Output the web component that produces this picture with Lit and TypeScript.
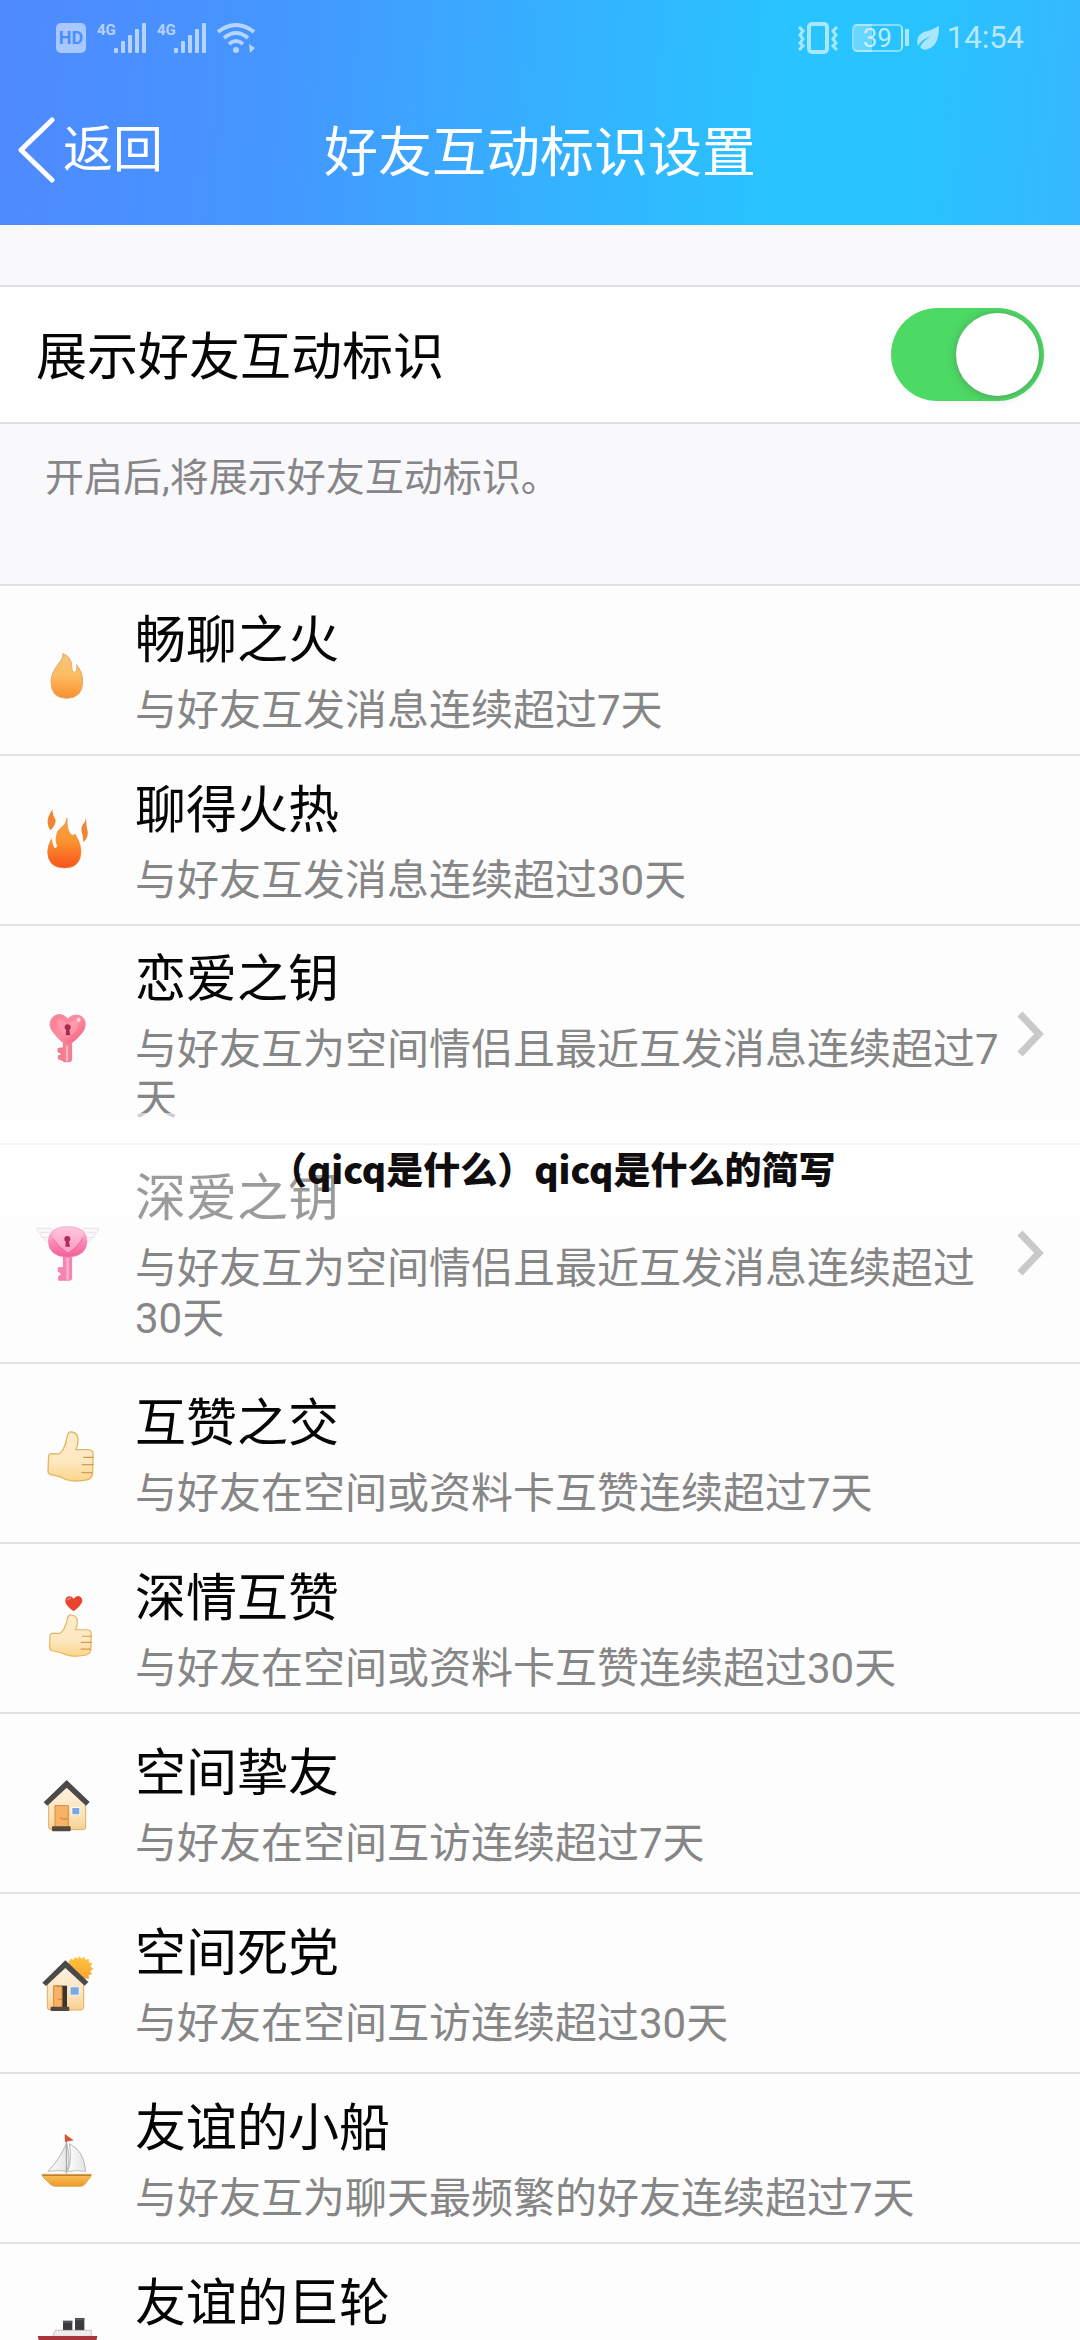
import { LitElement, html, css, svg, nothing, type TemplateResult } from "lit";
import { customElement, property, state } from "lit/decorators.js";
import { classMap } from "lit/directives/class-map.js";

type IconName =
  | "flame" | "blaze" | "key" | "wingedKey" | "thumb"
  | "thumbHeart" | "house" | "sunHouse" | "sailboat" | "liner";

interface Badge {
  icon: IconName;
  title: string;
  desc: string;
  roomy?: boolean;
  link?: boolean;
  caption?: string;
}

const BADGES: Badge[] = [
  { icon: "flame", title: "畅聊之火", desc: "与好友互发消息连续超过7天" },
  { icon: "blaze", title: "聊得火热", desc: "与好友互发消息连续超过30天" },
  { icon: "key", title: "恋爱之钥", desc: "与好友互为空间情侣且最近互发消息连续超过7天", link: true },
  {
    icon: "wingedKey",
    title: "深爱之钥",
    desc: "与好友互为空间情侣且最近互发消息连续超过30天",
    link: true,
    caption: "（qicq是什么）qicq是什么的简写",
  },
  { icon: "thumb", title: "互赞之交", desc: "与好友在空间或资料卡互赞连续超过7天", roomy: true },
  { icon: "thumbHeart", title: "深情互赞", desc: "与好友在空间或资料卡互赞连续超过30天" },
  { icon: "house", title: "空间挚友", desc: "与好友在空间互访连续超过7天", roomy: true },
  { icon: "sunHouse", title: "空间死党", desc: "与好友在空间互访连续超过30天", roomy: true },
  { icon: "sailboat", title: "友谊的小船", desc: "与好友互为聊天最频繁的好友连续超过7天" },
  { icon: "liner", title: "友谊的巨轮", desc: "", roomy: true },
];

const thumbShape = svg`
  <path d="M146 283 Q148 278 156 278 L176 279 Q186 274 190 264 Q200 244 202 224 Q205 211 216 213 Q234 216 234 236 Q234 252 228 266
    L266 266 Q279 267 279 279 L278 332 Q278 350 264 356 Q238 362 212 359 Q196 357 182 348 Q166 344 152 341 Q144 338 144 330 Z"
    fill="url(#skin)" stroke="#e3b564" stroke-width="4" stroke-linejoin="round"/>
  <path d="M251 289 H279 M247 311 H279 M246 335 H277" fill="none" stroke="#cf9d4c" stroke-width="4" stroke-linecap="round"/>`;

const skinGradient = svg`
  <linearGradient id="skin" x1="0" y1="0" x2="0" y2="1">
    <stop offset="0" stop-color="#fdeccb"/><stop offset="0.6" stop-color="#fde8c1"/><stop offset="1" stop-color="#fcd58a"/>
  </linearGradient>`;

const ICONS: Record<IconName, { box: string; art: TemplateResult<2> }> = {
  flame: {
    box: "96 159 216 216",
    art: svg`
      <defs><linearGradient id="fl" x1="0" y1="0" x2="0" y2="1">
        <stop offset="0" stop-color="#f7c67c"/><stop offset="0.5" stop-color="#fbbb62"/><stop offset="1" stop-color="#fa8f2b"/>
      </linearGradient></defs>
      <path d="M189 217 Q190 229 182 240 Q153 273 153 302 Q153 351 200 352 Q247 351 248 304 Q249 272 228 250 Q231 268 225 272 Q218 274 217 262 Q216 229 189 217 Z"
        fill="url(#fl)" stroke="#e6a867" stroke-width="3"/>
      <path d="M217 250 Q216 273 224 272 Q231 269 228 250 Q224 247 217 244 Z" fill="#fff"/>`,
  },
  blaze: {
    box: "96 669 216 216",
    art: svg`
      <defs><linearGradient id="bl" x1="0" y1="0" x2="0" y2="1">
        <stop offset="0" stop-color="#f5a43e"/><stop offset="0.45" stop-color="#fb9430"/><stop offset="1" stop-color="#f9521c"/>
      </linearGradient></defs>
      <path d="M201 711 Q200 727 184 740 Q144 775 143 812 Q143 860 194 861 Q242 860 243 812 Q243 789 226 758 Q222 766 214 762 Q200 750 201 711 Z"
        fill="url(#bl)" stroke="#e8893a" stroke-width="2"/>
      <path d="M157 750 Q151 776 163 800 Q170 802 171 795 Q162 774 173 748 Z" fill="#fff"/>
      <path d="M226 758 Q221 744 235 754 L246 784 L242 788 Z" fill="#fff"/>
      <path d="M157 686 Q141 708 143 726 Q144 738 151 748 Q168 732 167 716 Q159 706 157 686 Z" fill="#f08435"/>
      <path d="M258 711 Q256 724 247 733 Q241 748 248 762 L250 784 Q266 768 263 752 Q258 730 258 711 Z" fill="#f08435"/>`,
  },
  key: {
    box: "96 234 216 216",
    art: svg`
      <defs><linearGradient id="ky" x1="0" y1="0" x2="1" y2="1">
        <stop offset="0" stop-color="#fb7f98"/><stop offset="0.5" stop-color="#fb8ea2"/><stop offset="1" stop-color="#f0506f"/>
      </linearGradient></defs>
      <path d="M190 352 H215 V415 Q215 422 208 422 H194 Q188 422 188 418 L175 414 V404 L183 402 V396 L174 393 V382 L190 380 Z" fill="#f77d92" stroke="#e86079" stroke-width="2"/>
      <path d="M201 362 V420" stroke="#fdb4c0" stroke-width="7"/>
      <path d="M203 294 Q190 278 173 281 Q151 287 150 311 Q151 325 163 338 Q178 358 203 375 Q230 357 246 336 Q257 322 256 308 Q254 286 232 282 Q216 280 203 294 Z"
        fill="url(#ky)" stroke="#f2909f" stroke-width="3"/>
      <path d="M170 296 Q188 290 203 311 Q216 294 238 300 Q236 328 204 350 Q172 326 170 296 Z" fill="#ffabb8" opacity="0.45"/>
      <circle cx="203" cy="319" r="9" fill="#a92b4c"/><path d="M199 322 H207 L211 343 H197 Z" fill="#a92b4c"/>
      <circle cx="236" cy="296" r="6" fill="#fff" opacity="0.65"/>`,
  },
  wingedKey: {
    box: "96 891 216 216",
    art: svg`
      <defs><linearGradient id="wk" x1="0" y1="0" x2="0" y2="1">
        <stop offset="0" stop-color="#ffd0e3"/><stop offset="0.55" stop-color="#f985b2"/><stop offset="1" stop-color="#f25d98"/>
      </linearGradient></defs>
      <g fill="#fbf8fb" stroke="#e4dde3" stroke-width="2.5">
        <path d="M110 922 H156 L152 966 Q132 964 132 952 Q121 949 122 939 Q111 934 110 922 Z"/>
        <path d="M296 922 H250 L254 966 Q274 964 274 952 Q285 949 284 939 Q295 934 296 922 Z"/>
        <path d="M120 934 H150 M130 949 H148 M256 934 H286 M258 949 H276"/>
      </g>
      <path d="M190 1000 H215 V1072 Q215 1078 208 1078 H176 V1066 L183 1062 V1056 L175 1052 V1040 H190 Z" fill="#f784b2" stroke="#ea6a9d" stroke-width="2"/>
      <path d="M203 1010 V1076" stroke="#fdb6d0" stroke-width="7"/>
      <path d="M203 917 Q258 916 261 960 Q261 1006 203 1009 Q145 1006 145 960 Q148 916 203 917 Z" fill="url(#wk)" stroke="#f38fb6" stroke-width="2"/>
      <path d="M158 932 Q182 920 203 940 Q224 920 248 932 Q252 962 204 996 Q155 962 158 932 Z" fill="#ffc3da" opacity="0.6"/>
      <path d="M160 955 Q176 980 204 996 Q232 980 249 952" fill="none" stroke="#ee6b9f" stroke-width="3"/>
      <circle cx="202" cy="954" r="9" fill="#b02a62"/><path d="M198 956 H206 L210 977 H196 Z" fill="#b02a62"/>`,
  },
  thumb: {
    box: "96 168 216 216",
    art: svg`<defs>${skinGradient}</defs>${thumbShape}`,
  },
  thumbHeart: {
    box: "96 693 216 216",
    art: svg`
      <defs>${skinGradient}</defs>
      <g transform="translate(15.5 583) scale(0.925 0.84)">${thumbShape}</g>
      <path d="M221 713 Q214 704 205 706 Q195 710 196 722 Q198 734 221 751 Q244 734 247 721 Q247 708 236 705 Q227 704 221 713 Z" fill="#ea4430"/>
      <path d="M203 716 Q206 711 212 712" fill="none" stroke="#f58a70" stroke-width="4" stroke-linecap="round"/>`,
  },
  house: {
    box: "96 138 216 216",
    art: svg`
      <defs><linearGradient id="wl" x1="0" y1="0" x2="0" y2="1">
        <stop offset="0" stop-color="#fdf3e2"/><stop offset="0.7" stop-color="#fce1b6"/><stop offset="1" stop-color="#f8cf8e"/>
      </linearGradient></defs>
      <path d="M146 242 L200 194 L257 242 V318 Q257 326 249 326 H154 Q146 326 146 318 Z" fill="url(#wl)" stroke="#dfae66" stroke-width="3"/>
      <path d="M131 244 L200 177 L269 243 L258 254 L200 200 L142 254 Z" fill="#4b4949"/>
      <rect x="165" y="254" width="40" height="66" fill="#f8b266" stroke="#d48c3b" stroke-width="3"/>
      <path d="M180 290 Q190 298 203 293" fill="none" stroke="#c97e35" stroke-width="3"/>
      <rect x="214" y="258" width="27" height="24" fill="#fff"/><rect x="217" y="261" width="21" height="19" fill="#78a6e0"/>
      <rect x="156" y="316" width="56" height="15" rx="3" fill="#54483f"/>`,
  },
  sunHouse: {
    box: "96 678 216 216",
    art: svg`
      <defs>
        <linearGradient id="wm" x1="0" y1="0" x2="0" y2="1">
          <stop offset="0" stop-color="#fdf3e2"/><stop offset="0.7" stop-color="#fce1b6"/><stop offset="1" stop-color="#f8cf8e"/>
        </linearGradient>
        <linearGradient id="sn" x1="0" y1="0" x2="0" y2="1">
          <stop offset="0" stop-color="#fdc53c"/><stop offset="1" stop-color="#fa9a34"/>
        </linearGradient>
      </defs>
      <path d="M238 706 L244 713 L253 707 L256 716 L267 714 L266 724 L277 727 L271 736 L280 744 L271 750 L276 760 L266 763 L267 774 L256 772 L240 790 L205 760 L206 722 L212 713 L221 716 L226 708 L233 713 Z" fill="url(#sn)"/>
      <path d="M142 782 L196 734 L251 782 V858 Q251 867 243 867 H150 Q142 867 142 858 Z" fill="url(#wm)" stroke="#dfae66" stroke-width="3"/>
      <path d="M127 785 L196 718 L265 783 L254 794 L196 741 L138 795 Z" fill="#4b4949"/>
      <rect x="161" y="794" width="40" height="66" fill="#3b3431"/>
      <path d="M161 794 L186 797 V862 L161 859 Z" fill="#f8b266" stroke="#d48c3b" stroke-width="3"/>
      <path d="M172 832 Q178 838 185 835" fill="none" stroke="#c97e35" stroke-width="3"/>
      <rect x="209" y="796" width="30" height="28" fill="#e9f2fb"/><rect x="212" y="799" width="24" height="22" fill="#78a9df"/>
      <rect x="152" y="857" width="56" height="13" rx="3" fill="#54483f"/>`,
  },
  sailboat: {
    box: "96 183 216 216",
    art: svg`
      <defs>
        <linearGradient id="hl" x1="0" y1="0" x2="0" y2="1"><stop offset="0" stop-color="#f8c156"/><stop offset="1" stop-color="#ee9a2b"/></linearGradient>
        <linearGradient id="sa" x1="0" y1="0" x2="1" y2="0"><stop offset="0" stop-color="#fdfdfd"/><stop offset="1" stop-color="#e4e4e6"/></linearGradient>
      </defs>
      <path d="M200 246 Q178 296 144 331 Q174 326 200 331 Q214 300 200 246 Z" fill="url(#sa)" stroke="#b9b7b7" stroke-width="3"/>
      <path d="M208 248 Q252 268 257 331 Q232 326 203 332 Q217 296 208 248 Z" fill="url(#sa)" stroke="#b9b7b7" stroke-width="3"/>
      <path d="M199 222 V338" stroke="#a39b98" stroke-width="3"/>
      <path d="M194 219 L221 238 L195 243 Z" fill="#df5138"/>
      <path d="M126 340 H274 Q274 346 270 350 L253 371 Q248 376 240 376 H166 Q157 376 151 370 L131 350 Q126 346 126 340 Z" fill="url(#hl)" stroke="#d58f39" stroke-width="2"/>
      <path d="M127 343 H273" stroke="#b9802f" stroke-width="4"/>`,
  },
  liner: {
    box: "96 711 216 216",
    art: svg`
      <rect x="189" y="782" width="28" height="30" fill="#3c3b3e"/>
      <rect x="225" y="774" width="28" height="38" fill="#3c3b3e"/>
      <path d="M189 786 H217 M225 778 H253" stroke="#5d5b5f" stroke-width="5"/>
      <path d="M166 811 H274 V829 H158 Z" fill="#efedec" stroke="#b7aca9" stroke-width="2"/>
      <path d="M113 828 H292 L282 880 Q278 890 268 890 H140 Q130 890 126 880 Z" fill="#a8343c"/>`,
  },
};

@customElement("badge-row")
class BadgeRow extends LitElement {
  @property({ attribute: false }) badge!: Badge;

  static styles = css`
    :host { display: block; }
    .row {
      position: relative;
      box-sizing: border-box;
      display: flex;
      align-items: center;
      min-height: 170px;
      padding: 0 36px 0 32px;
      border-bottom: 2px solid #e2e2e4;
      background: #fdfdfd;
      color: inherit;
      text-decoration: none;
    }
    .row.roomy { min-height: 180px; }
    .icon { flex: none; width: 72px; height: 72px; }
    .text { flex: 1; min-width: 0; margin-left: 31px; padding: 25px 0 18px; }
    .title { margin: 0; font-size: 51px; line-height: 58px; font-weight: 400; color: #050505; }
    .desc { margin: 16px 0 0; min-height: 50px; font-size: 42px; line-height: 50px; color: #868686; }
    .chevron { flex: none; width: 28px; height: 48px; margin-left: 12px; }
    .caption {
      position: absolute;
      z-index: 1;
      top: -32px;
      left: 0;
      right: 0;
      padding-left: 25%;
      background: rgba(255, 255, 255, 0.6);
      font-family: "Noto Sans CJK SC", sans-serif;
      font-size: 37px;
      line-height: 110px;
      font-weight: 900;
      white-space: nowrap;
      color: #0f0d0e;
    }
  `;

  render() {
    const { icon, title, desc, roomy, link, caption } = this.badge;
    const { box, art } = ICONS[icon];
    const body = html`
      <svg class="icon" viewBox=${box} aria-hidden="true">${art}</svg>
      <div class="text">
        <h2 class="title">${title}</h2>
        <p class="desc">${desc}</p>
      </div>
      ${link
        ? html`<svg class="chevron" viewBox="0 0 28 48" aria-hidden="true">
            <path d="M4 3 L23 23 L4 43" fill="none" stroke="#c9c9c9" stroke-width="7"/>
          </svg>`
        : nothing}
      ${caption ? html`<span class="caption">${caption}</span>` : nothing}
    `;
    const classes = classMap({ row: true, roomy: !!roomy });
    return link
      ? html`<a class=${classes} href="#detail">${body}</a>`
      : html`<div class=${classes}>${body}</div>`;
  }
}

@customElement("status-bar")
class StatusBar extends LitElement {
  static styles = css`
    :host {
      display: flex;
      justify-content: space-between;
      align-items: center;
      height: 75px;
      padding: 0 56px;
      color: rgba(255, 255, 255, 0.6);
    }
    .group { display: flex; align-items: center; gap: 11px; }
    .group.right { gap: 8px; }
    .hd {
      width: 30px;
      border-radius: 5px;
      background: rgba(255, 255, 255, 0.52);
      color: #478fff;
      font: bold 18px/30px Roboto, sans-serif;
      text-align: center;
    }
    .signal { display: flex; align-items: flex-start; }
    .net { width: 17px; font: bold 15px/15px Roboto, sans-serif; }
    svg { display: block; fill: currentColor; }
    .bars { width: 32px; height: 30px; }
    .wifi { width: 38px; height: 30px; }
    .vibrate { width: 40px; height: 32px; margin-right: 6px; }
    .battery { display: flex; align-items: center; gap: 2px; }
    .cell {
      box-sizing: border-box;
      width: 51px;
      border: 2px solid rgba(255, 255, 255, 0.45);
      border-radius: 5px;
      background: linear-gradient(90deg, rgba(255, 255, 255, 0.3) 39%, transparent 39%);
      font-size: 26px;
      line-height: 24px;
      text-align: center;
      color: rgba(255, 255, 255, 0.7);
    }
    .nub { width: 4px; height: 17px; background: currentColor; }
    .leaf { width: 22px; height: 24px; }
    .time { font-size: 31px; line-height: 40px; color: rgba(255, 255, 255, 0.66); }
  `;

  private signal() {
    return html`<span class="signal">
      <span class="net">4G</span>
      <svg class="bars" viewBox="0 0 32 30" aria-hidden="true">
        <rect x="0" y="25" width="4" height="5" rx="1"/><rect x="7" y="18" width="4" height="12" rx="1"/>
        <rect x="14" y="12" width="4" height="18" rx="1"/><rect x="21" y="6" width="4" height="24" rx="1"/>
        <rect x="28" y="0" width="4" height="30" rx="1"/>
      </svg>
    </span>`;
  }

  render() {
    return html`
      <div class="group">
        <span class="hd">HD</span>
        ${this.signal()} ${this.signal()}
        <svg class="wifi" viewBox="0 0 38 30" aria-hidden="true">
          <g fill="none" stroke="currentColor" stroke-width="4">
            <path d="M1 9 Q19 -5 37 9"/><path d="M7 15 Q19 5 31 15"/><path d="M12 21 Q19 15 26 21"/>
          </g>
          <circle cx="19" cy="27" r="3"/><path d="M32 21 L38 25 L33 30 Z"/>
        </svg>
      </div>
      <div class="group right">
        <svg class="vibrate" viewBox="0 0 40 32" aria-hidden="true">
          <rect x="11" y="2" width="18" height="28" rx="3" fill="none" stroke="currentColor" stroke-width="4"/>
          <path d="M1 5 L5 9 L2 13 L5 17 L2 21 L5 24 L1 28 M39 5 L35 9 L38 13 L35 17 L38 21 L35 24 L39 28" fill="none" stroke="currentColor" stroke-width="3"/>
        </svg>
        <span class="battery"><span class="cell">39</span><span class="nub"></span></span>
        <svg class="leaf" viewBox="0 0 22 24" aria-hidden="true">
          <path d="M22 0 Q22 20 11 23 Q6 25 3 21 Q7 14 14 10 Q5 13 1 20 Q-2 10 7 6 Q15 4 22 0 Z"/>
        </svg>
        <span class="time">14:54</span>
      </div>
    `;
  }
}

@customElement("app-root")
class AppRoot extends LitElement {
  @state() private shown = true;

  static styles = css`
    :host {
      display: flex;
      flex-direction: column;
      height: 100vh;
      background: #f9f8fb;
      font-family: Roboto, "Noto Sans CJK SC", sans-serif;
    }
    .header {
      flex: none;
      background: linear-gradient(95deg, #4f89ff 0%, #4596ff 25%, #36b0ff 50%, #28c4ff 73%, #28c3ff 84%, #36b7ff 100%);
      color: #fff;
    }
    .nav { display: grid; grid-template-columns: 1fr auto 1fr; align-items: center; height: 150px; }
    .back {
      display: flex;
      align-items: center;
      gap: 7px;
      justify-self: start;
      padding: 0 16px;
      border: 0;
      background: none;
      color: inherit;
      font: inherit;
      font-size: 50px;
      line-height: 60px;
    }
    .arrow { width: 40px; height: 66px; }
    .heading { margin: 0; padding-top: 8px; font-size: 54px; line-height: 64px; font-weight: 400; }
    .main { flex: 1; min-height: 0; overflow-y: auto; scrollbar-width: none; }
    .setting {
      display: flex;
      align-items: center;
      justify-content: space-between;
      margin-top: 60px;
      padding: 0 36px;
      height: 135px;
      border: solid #e0dfe2;
      border-width: 2px 0;
      background: #fefefe;
    }
    .label { padding-top: 6px; font-size: 51px; line-height: 60px; color: #050505; }
    .switch {
      appearance: none;
      box-sizing: border-box;
      display: flex;
      width: 153px;
      height: 93px;
      margin: 0;
      padding: 5px;
      border-radius: 47px;
      background: #d5d5d8;
    }
    .switch:checked { justify-content: flex-end; background: #4cd964; }
    .switch::before {
      content: "";
      width: 83px;
      border-radius: 50%;
      background: #fff;
      box-shadow: 0 1px 9px rgba(80, 110, 90, 0.55);
    }
    .hint { margin: 0; padding: 31px 45px 83px; font-size: 39px; line-height: 46px; color: #868588; }
    .list { margin: 0; padding: 0; list-style: none; border-top: 2px solid #e0dfe2; }
  `;

  private toggle(event: Event) {
    this.shown = (event.target as HTMLInputElement).checked;
  }

  render() {
    return html`
      <header class="header">
        <status-bar></status-bar>
        <nav class="nav">
          <button class="back" type="button">
            <svg class="arrow" viewBox="0 0 40 66" aria-hidden="true">
              <path d="M36 3 L5 33 L36 63" fill="none" stroke="#fff" stroke-width="5" stroke-linecap="round" stroke-linejoin="round"/>
            </svg>返回
          </button>
          <h1 class="heading">好友互动标识设置</h1>
        </nav>
      </header>
      <main class="main">
        <div class="setting">
          <label class="label" for="show">展示好友互动标识</label>
          <input class="switch" id="show" type="checkbox" .checked=${this.shown} @change=${this.toggle}>
        </div>
        <p class="hint">开启后,将展示好友互动标识。</p>
        <ul class="list">
          ${BADGES.map((badge) => html`<li><badge-row .badge=${badge}></badge-row></li>`)}
        </ul>
      </main>
    `;
  }
}
